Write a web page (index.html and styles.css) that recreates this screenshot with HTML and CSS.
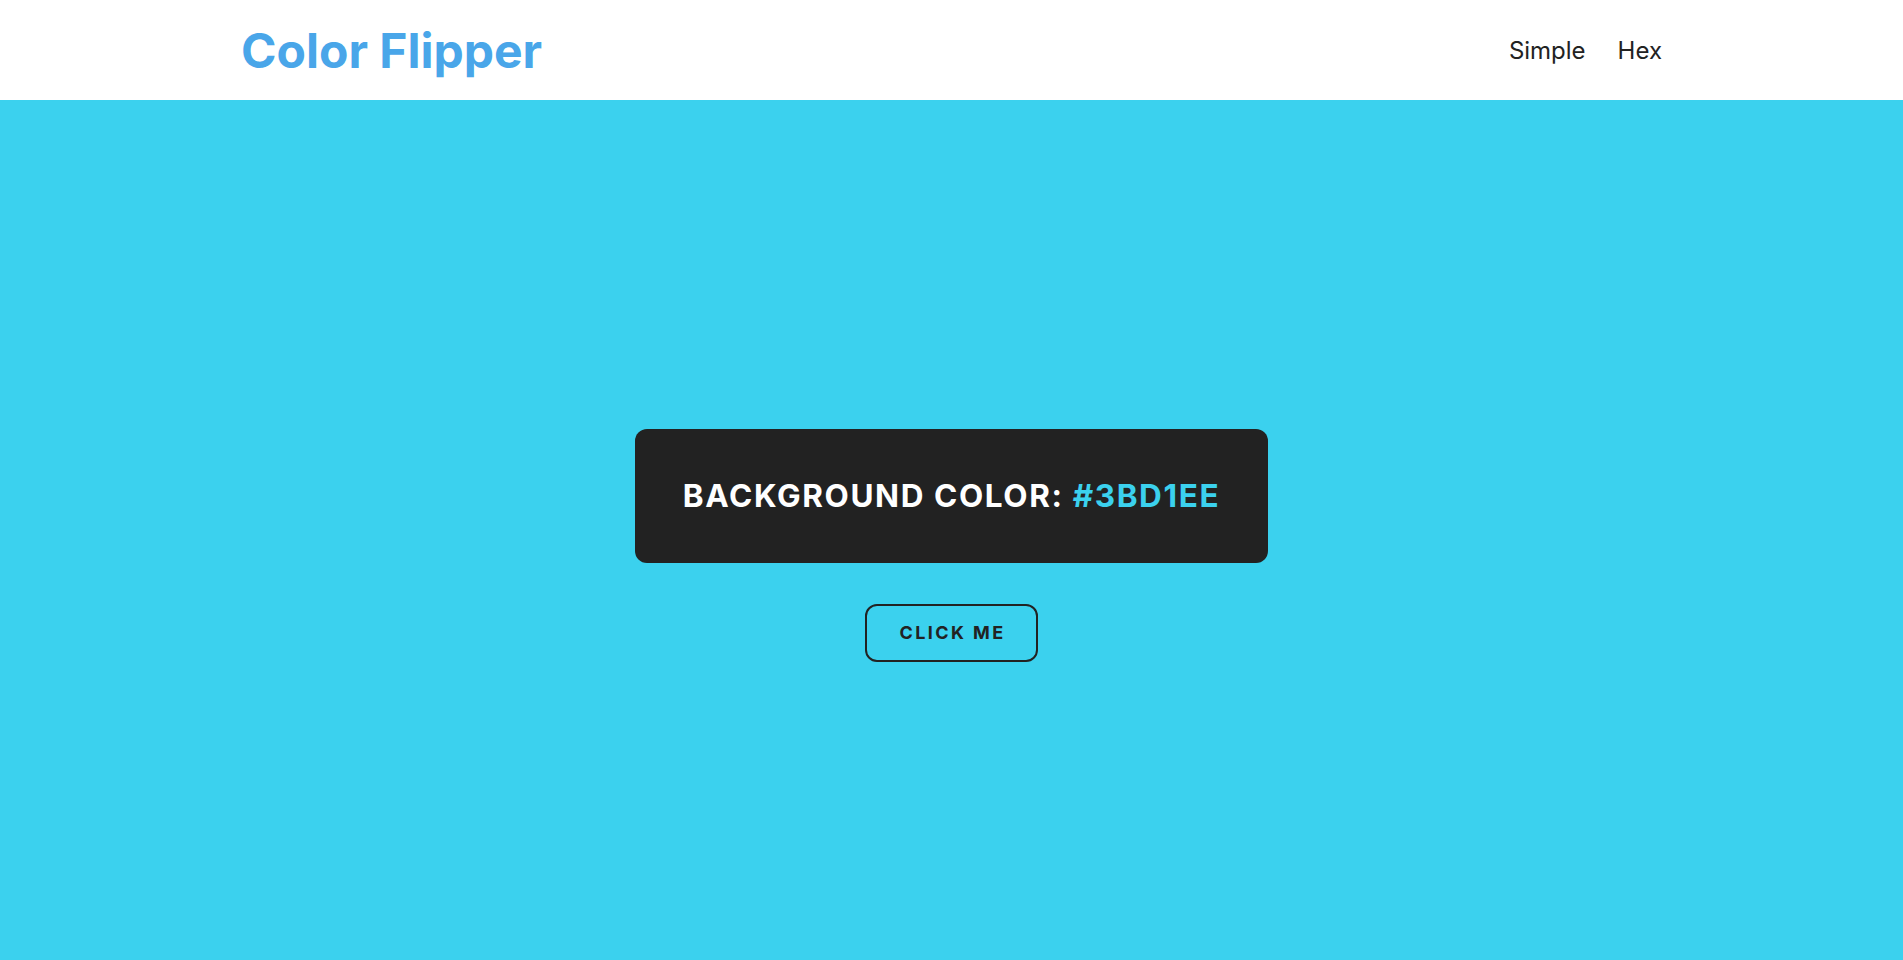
FILE: index.html
```html
<!DOCTYPE html>
<html lang="en">
<head>
<meta charset="utf-8">
<title>Color Flipper</title>
<link rel="stylesheet" href="styles.css">
</head>
<body>
<nav class="nav">
  <div class="nav-center">
    <h1 class="logo">Color Flipper</h1>
    <ul class="nav-links">
      <li><a href="#">Simple</a></li>
      <li><a href="#">Hex</a></li>
    </ul>
  </div>
</nav>
<main class="main">
  <div class="container">
    <h2 class="card">BACKGROUND COLOR: <span class="color">#3BD1EE</span></h2>
    <button class="btn">CLICK ME</button>
  </div>
</main>
</body>
</html>
```
FILE: styles.css
```css
* { box-sizing: border-box; }
html, body { margin: 0; padding: 0; }
body {
  font-family: Inter, "Liberation Sans", sans-serif;
  background: #3bd1ee;
  color: #222;
  height: 100vh;
  display: flex;
  flex-direction: column;
}
.nav {
  background: #fff;
  height: 100px;
  flex: none;
  display: flex;
  align-items: center;
}
.nav-center {
  width: 1421px;
  margin: 0 auto;
  display: flex;
  justify-content: space-between;
  align-items: center;
}
.logo {
  margin: 0;
  font-size: 48px;
  font-weight: 700;
  color: #49a6e9;
  letter-spacing: 0;
}
.nav-links {
  list-style: none;
  margin: 0;
  padding: 0;
  display: flex;
  gap: 32px;
}
.nav-links a {
  text-decoration: none;
  color: #222;
  font-size: 24px;
}
.main {
  flex: 1;
  display: flex;
  align-items: center;
  justify-content: center;
  padding-top: 30px;
}
.container {
  display: flex;
  flex-direction: column;
  align-items: center;
  gap: 41px;
}
.card {
  margin: 0;
  background: #222;
  color: #fff;
  border-radius: 12px;
  padding: 48px 48px;
  font-size: 31.5px;
  font-weight: 700;
  line-height: 38px;
  letter-spacing: 1.6px;
}
.color { color: #3bd1ee; }
.btn {
  background: transparent;
  border: 2px solid #222;
  border-radius: 12px;
  padding: 14px 31px 14px 33px;
  font-family: inherit;
  font-size: 18px;
  font-weight: 700;
  line-height: 26px;
  letter-spacing: 2.4px;
  color: #222;
  cursor: pointer;
}
```
